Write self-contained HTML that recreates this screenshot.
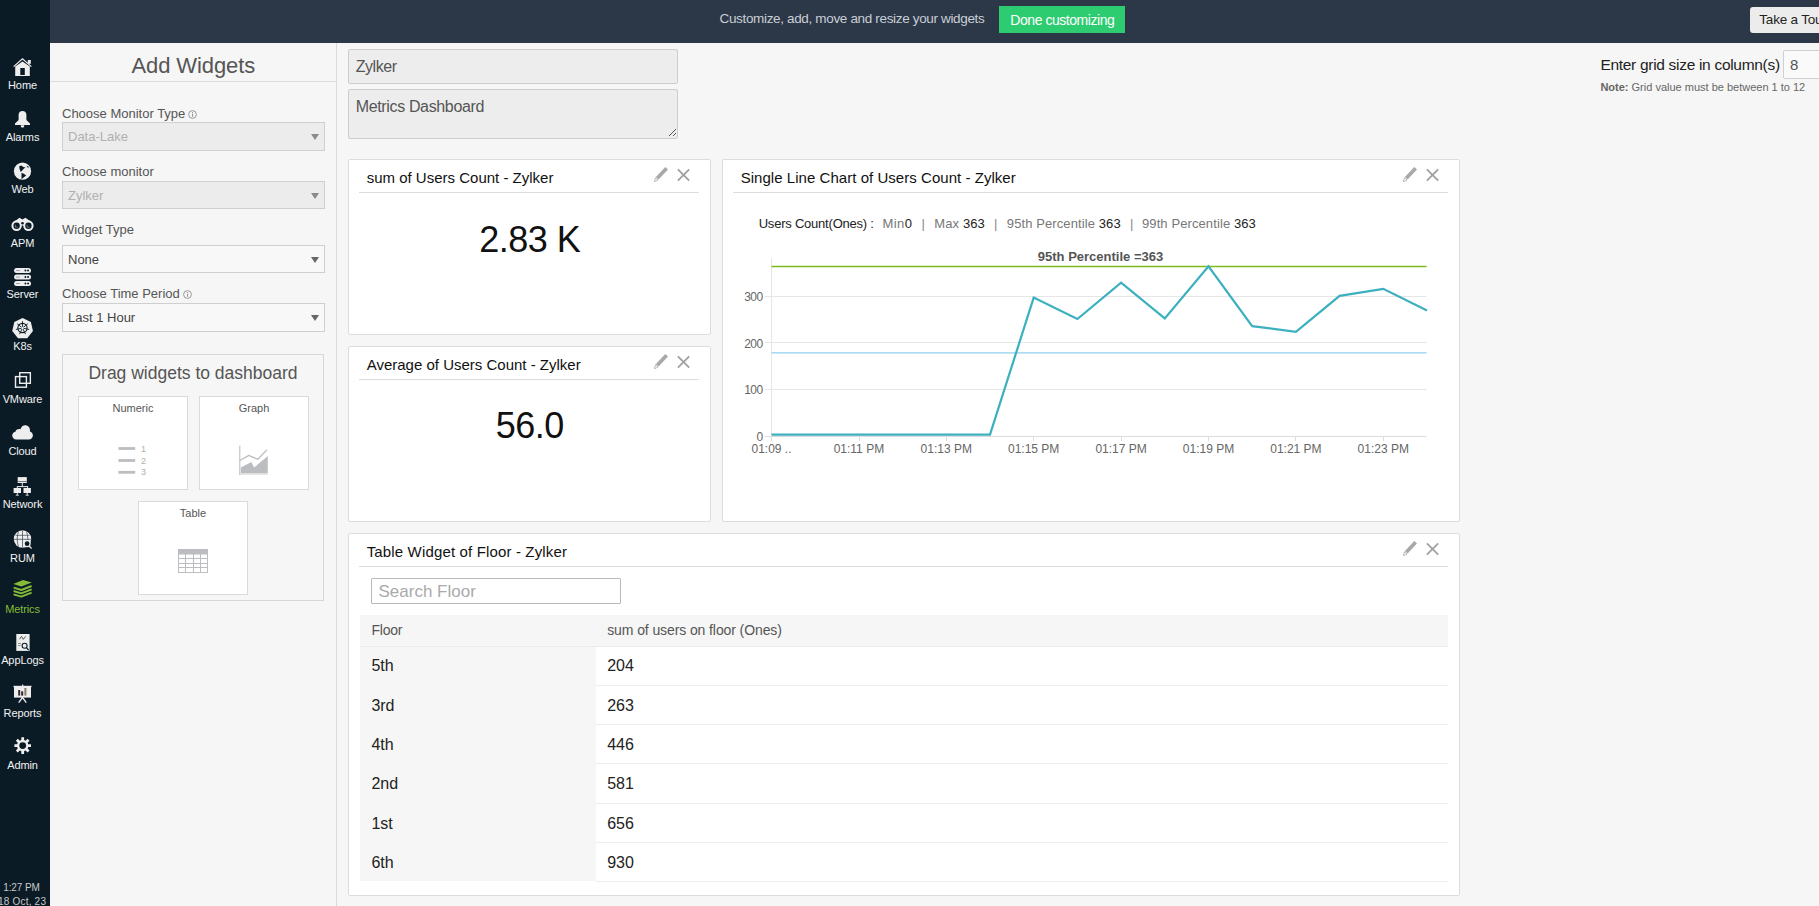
<!DOCTYPE html>
<html><head><meta charset="utf-8">
<style>
*{box-sizing:border-box;margin:0;padding:0}
html,body{width:1819px;height:906px;overflow:hidden;background:#f6f6f6;font-family:"Liberation Sans",sans-serif;color:#333}
.a{position:absolute;white-space:nowrap}
#side{position:absolute;left:0;top:0;width:50px;height:906px;background:#0a1b26}
#top{position:absolute;left:50px;top:0;width:1769px;height:43px;background:#2c3848}
#lp{position:absolute;left:50px;top:43px;width:287px;height:863px;background:#f6f6f6;border-right:1px solid #dadada}
.nl{position:absolute;left:0;width:45px;text-align:center;color:#fff;font-size:11px;line-height:13px;white-space:nowrap;letter-spacing:-0.1px}
.ni{position:absolute}
.lbl{position:absolute;left:62px;font-size:13px;line-height:15px;color:#555;white-space:nowrap}
.sel{position:absolute;left:62px;width:263px;height:29px;border:1px solid #cfcfcf;background:#f8f8f8;font-size:13px;color:#444;padding:0 0 0 5px;line-height:27px;white-space:nowrap}
.sel.dis{background:#ececec;color:#b0b0b0}
.sel i{position:absolute;right:5px;top:11px;width:0;height:0;border-left:4.6px solid transparent;border-right:4.6px solid transparent;border-top:6px solid #666}
.sel.dis i{border-top-color:#8a8a8a}
.card{position:absolute;background:#fff;border:1px solid #dadada}
.card .ct{position:absolute;left:0;right:0;top:4.5px;text-align:center;font-size:11px;line-height:13px;color:#555}
.wd{position:absolute;background:#fff;border:1px solid #dcdcdc;border-radius:2px}
.wt{position:absolute;left:18px;font-size:15px;line-height:17px;color:#111;white-space:nowrap}
.wl{position:absolute;left:11px;height:1px;background:#dcdcdc}
.ic{position:absolute}
</style></head><body>
<div id="side"></div><div id="top"></div><div id="lp"></div>
<svg class="ic" style="left:0;top:0" width="50" height="906" viewBox="0 0 50 906"><path d="M13.6 66.6 L22.5 58.8 L31.4 66.6" fill="none" stroke="#eeeeee" stroke-width="1.2"/><path d="M15.2 76 V66.6 L22.5 61.6 L29.8 66.6 V76Z M20.3 68.1 V75 H24.8 V68.1Z" fill="#eeeeee" fill-rule="evenodd"/><rect x="27.8" y="60" width="3" height="3.8" fill="#eeeeee"/><path d="M22.5 111 C20.2 111 18.6 112.6 18.6 114.8 V120 L15 123.6 V124.9 H30 V123.6 L26.4 120 V114.8 C26.4 112.6 24.8 111 22.5 111Z M20.8 125.3 H24.2 V126 C24.2 127 23.5 127.6 22.5 127.6 C21.5 127.6 20.8 127 20.8 126Z" fill="#eeeeee"/><circle cx="22.5" cy="171.2" r="8.6" fill="#eeeeee"/><path d="M19.2 166.2 L21.4 165.6 L23.2 167 L25.6 167.6 L24 168.6 L22.2 170.6 L20.8 172 L19.6 169.2Z M21.4 173 L23.4 173.4 L26.2 175.4 L22.6 178.2 L21.6 179.4Z M26.4 165.8 L28.6 166.4 L28.2 168.2Z" fill="#0a1b26"/><path d="M12.5 225.5 C12.5 222.5 14 221 16.5 220 L19.5 217.8 L22.5 219.5 L25.5 217.8 L28.5 220 C31 221 32.8 222.5 32.8 225.5Z" fill="#eeeeee"/><circle cx="16.6" cy="225.8" r="5.2" fill="#eeeeee"/><circle cx="28.4" cy="225.8" r="5.2" fill="#eeeeee"/><circle cx="16.6" cy="225.8" r="3.2" fill="#0a1b26"/><circle cx="28.4" cy="225.8" r="3.2" fill="#0a1b26"/><circle cx="22.5" cy="223.3" r="1.3" fill="#0a1b26"/><path d="M15.3 224.6 V227.2 H17.8 M27.1 224.6 V227.2 H29.6" fill="none" stroke="#aaa" stroke-width="0.6"/><rect x="14.1" y="268.0" width="16.9" height="5" rx="2.5" fill="#eeeeee"/><rect x="16" y="270.1" width="4" height="0.9" fill="#9a9aa8"/><circle cx="25.4" cy="270.5" r="0.95" fill="#0a1b26"/><circle cx="28.1" cy="270.5" r="0.95" fill="#0a1b26"/><rect x="14.1" y="274.5" width="16.9" height="5" rx="2.5" fill="#eeeeee"/><rect x="16" y="276.6" width="4" height="0.9" fill="#9a9aa8"/><circle cx="25.4" cy="277.0" r="0.95" fill="#0a1b26"/><circle cx="28.1" cy="277.0" r="0.95" fill="#0a1b26"/><rect x="14.1" y="281.0" width="16.9" height="5" rx="2.5" fill="#eeeeee"/><rect x="16" y="283.1" width="4" height="0.9" fill="#9a9aa8"/><circle cx="25.4" cy="283.5" r="0.95" fill="#0a1b26"/><circle cx="28.1" cy="283.5" r="0.95" fill="#0a1b26"/><path d="M22.60 318.00 L30.89 321.99 L32.93 330.96 L27.20 338.15 L18.00 338.15 L12.27 330.96 L14.31 321.99Z" fill="#eeeeee"/><circle cx="22.5" cy="328" r="4.6" fill="none" stroke="#0a1b26" stroke-width="1.1"/><path d="M22.50 328.00 L22.50 321.20 M22.50 328.00 L27.82 323.76 M22.50 328.00 L29.13 329.51 M22.50 328.00 L25.45 334.13 M22.50 328.00 L19.55 334.13 M22.50 328.00 L15.87 329.51 M22.50 328.00 L17.18 323.76 " stroke="#0a1b26" stroke-width="0.9"/><circle cx="22.5" cy="328" r="1.2" fill="#eeeeee"/><rect x="19.75" y="372.7" width="10.6" height="10.6" fill="none" stroke="#eeeeee" stroke-width="1.4"/><rect x="15.5" y="376.6" width="10.9" height="10.6" fill="none" stroke="#eeeeee" stroke-width="1.4"/><path d="M16.2 439.6 C14 439.6 12.2 437.8 12.2 435.6 C12.2 433.6 13.6 432.2 15.4 431.8 C15.9 430 17.3 429 19 429 C19.5 429 20 429.1 20.4 429.3 C21.2 426.8 23 425.2 25.2 425.2 C28.2 425.2 30 427.6 30 430.6 C30 431 30 431.2 29.9 431.6 C31.6 432.1 32.9 433.6 32.9 435.6 C32.9 437.8 31.1 439.6 28.9 439.6Z" fill="#eeeeee"/><rect x="17.7" y="477.1" width="9.1" height="5.9" fill="#eeeeee"/><rect x="17.7" y="481" width="9.1" height="0.8" fill="#55606a"/><path d="M22.25 483 V486.6 M17.3 486.6 H27.6 M17.3 486.1 V488 M27.6 486.1 V488" fill="none" stroke="#eeeeee" stroke-width="1"/><rect x="13.6" y="488" width="7.4" height="5" fill="#eeeeee"/><rect x="23.5" y="488" width="7.4" height="5" fill="#eeeeee"/><path d="M17.3 493 V495 M15.8 495.2 H18.8 M27.2 493 V495 M25.7 495.2 H28.7" fill="none" stroke="#eeeeee" stroke-width="0.9"/><circle cx="22.5" cy="539" r="8.7" fill="#eeeeee"/><path d="M22.5 530.3 V547.7 M13.8 539.3 H31.2 M15.5 535.3 H29.5 M18.5 531.5 C16.8 535 16.8 543 18.5 546.5 M26.5 531.5 C28.2 535 28.2 543 26.5 546.5" fill="none" stroke="#4a5560" stroke-width="0.8"/><circle cx="27.1" cy="543.7" r="3.6" fill="#eeeeee"/><circle cx="27.1" cy="543.7" r="2.4" fill="#0a1b26"/><path d="M29 546 L31.6 548.4" stroke="#eeeeee" stroke-width="1.3"/><path d="M13.3 584 L23 580.1 L31.8 582.6 L21.3 586.6Z" fill="#86bb37"/><path d="M13.6 587.7 L21.3 590.0 L31.6 586.0" fill="none" stroke="#86bb37" stroke-width="1.9" stroke-linejoin="round"/><path d="M13.6 591.0 L21.3 593.3 L31.6 589.3" fill="none" stroke="#86bb37" stroke-width="1.9" stroke-linejoin="round"/><path d="M13.6 594.3 L21.3 596.6 L31.6 592.6" fill="none" stroke="#86bb37" stroke-width="1.9" stroke-linejoin="round"/><rect x="16.3" y="634" width="13.3" height="16.9" fill="#eeeeee"/><path d="M19.4 639.3 L21.5 636.4 L23.3 639.4 L25.6 636.4" fill="none" stroke="#4a4a5a" stroke-width="0.9"/><path d="M18 643.4 H21 M18 645.4 H20.5" stroke="#777" stroke-width="0.8"/><circle cx="24.6" cy="645.7" r="2.5" fill="none" stroke="#0a1b26" stroke-width="1.1"/><path d="M26.4 647.6 L28.6 650" stroke="#0a1b26" stroke-width="1.2"/><rect x="14" y="686" width="17" height="11.6" fill="#eeeeee"/><rect x="13.5" y="685.8" width="18" height="1.4" fill="#eeeeee"/><rect x="22" y="684.6" width="1.3" height="1.5" fill="#eeeeee"/><rect x="18.2" y="690" width="2" height="5.6" fill="#3a2a2a"/><rect x="21.2" y="691.3" width="2" height="4.3" fill="#2a2a3a"/><rect x="24.4" y="688" width="2" height="7.6" fill="#8a7a6a"/><path d="M22.5 697.5 L18.7 702.6 M22.5 697.5 L26.3 702.6" stroke="#eeeeee" stroke-width="1.3"/><path d="M21.23 740.09 L21.36 737.31 L24.04 737.31 L24.17 740.09 L25.56 740.67 L27.62 738.79 L29.51 740.68 L27.63 742.74 L28.21 744.13 L30.99 744.26 L30.99 746.94 L28.21 747.07 L27.63 748.46 L29.51 750.52 L27.62 752.41 L25.56 750.53 L24.17 751.11 L24.04 753.89 L21.36 753.89 L21.23 751.11 L19.84 750.53 L17.78 752.41 L15.89 750.52 L17.77 748.46 L17.19 747.07 L14.41 746.94 L14.41 744.26 L17.19 744.13 L17.77 742.74 L15.89 740.68 L17.78 738.79 L19.84 740.67Z" fill="#eeeeee" fill-rule="evenodd"/><circle cx="22.7" cy="745.6" r="3.4" fill="#0a1b26"/></svg>
<div class="nl" style="top:79.4px;color:#f2f2f2">Home</div>
<div class="nl" style="top:131.3px;color:#f2f2f2">Alarms</div>
<div class="nl" style="top:183.3px;color:#f2f2f2">Web</div>
<div class="nl" style="top:237.4px;color:#f2f2f2">APM</div>
<div class="nl" style="top:288.3px;color:#f2f2f2">Server</div>
<div class="nl" style="top:340.2px;color:#f2f2f2">K8s</div>
<div class="nl" style="top:392.7px;color:#f2f2f2">VMware</div>
<div class="nl" style="top:445.2px;color:#f2f2f2">Cloud</div>
<div class="nl" style="top:497.7px;color:#f2f2f2">Network</div>
<div class="nl" style="top:552.4px;color:#f2f2f2">RUM</div>
<div class="nl" style="top:602.6px;color:#86bb37">Metrics</div>
<div class="nl" style="top:654.1px;color:#f2f2f2">AppLogs</div>
<div class="nl" style="top:706.5px;color:#f2f2f2">Reports</div>
<div class="nl" style="top:758.7px;color:#f2f2f2">Admin</div>
<div class="nl" style="top:881.0px;font-size:10px;color:#c8c8c8;left:-1px">1:27 PM</div><div class="nl" style="top:895.2px;font-size:10px;color:#c8c8c8;left:-2px;letter-spacing:0.2px">18 Oct, 23</div>
<div class="a" style="left:-6.699999999999989px;width:400px;text-align:center;top:52.63px;font-size:22px;line-height:25.3px;color:#555;font-weight:400;letter-spacing:-0.1px">Add Widgets</div><div class="a" style="left:50px;top:81px;width:286px;height:1px;background:#dcdcdc"></div>
<div class="a" style="left:62px;top:106.82px;font-size:13px;line-height:14.95px;color:#555;font-weight:400;">Choose Monitor Type<svg width="9" height="9" viewBox="0 0 9 9" style="vertical-align:-1px;margin-left:3px"><circle cx="4.5" cy="4.5" r="3.9" fill="none" stroke="#999" stroke-width="1"/><rect x="4" y="3.8" width="1.1" height="3" fill="#999"/><rect x="4" y="2.1" width="1.1" height="1.1" fill="#999"/></svg></div><div class="sel dis" style="top:122px">Data-Lake<i></i></div>
<div class="a" style="left:62px;top:164.92px;font-size:13px;line-height:14.95px;color:#555;font-weight:400;">Choose monitor</div><div class="sel dis" style="top:181px;height:28px">Zylker<i></i></div>
<div class="a" style="left:62px;top:222.72px;font-size:13px;line-height:14.95px;color:#555;font-weight:400;">Widget Type</div><div class="sel" style="top:245px;height:28px">None<i></i></div>
<div class="a" style="left:62px;top:286.62px;font-size:13px;line-height:14.95px;color:#555;font-weight:400;">Choose Time Period<svg width="9" height="9" viewBox="0 0 9 9" style="vertical-align:-1px;margin-left:3px"><circle cx="4.5" cy="4.5" r="3.9" fill="none" stroke="#999" stroke-width="1"/><rect x="4" y="3.8" width="1.1" height="3" fill="#999"/><rect x="4" y="2.1" width="1.1" height="1.1" fill="#999"/></svg></div><div class="sel" style="top:303px">Last 1 Hour<i></i></div>
<div class="a" style="left:62px;top:354px;width:262px;height:247px;border:1px solid #d6d6d6"></div>
<div class="a" style="left:-7.0px;width:400px;text-align:center;top:362.88px;font-size:17.5px;line-height:20.12px;color:#555;font-weight:400;">Drag widgets to dashboard</div><div class="card" style="left:78px;top:396px;width:110px;height:94px"><div class="ct">Numeric</div></div><div class="card" style="left:199px;top:396px;width:110px;height:94px"><div class="ct">Graph</div></div><div class="card" style="left:138px;top:501px;width:110px;height:94px"><div class="ct">Table</div></div>
<svg class="ic" style="left:110px;top:440px" width="40" height="40" viewBox="110 440 40 40"><g fill="#bcbec1"><rect x="118.4" y="447.1" width="16.8" height="2.8"/><rect x="118.4" y="459.1" width="16.8" height="2.8"/><rect x="118.4" y="470.9" width="16.8" height="2.8"/></g><g font-family="Liberation Sans" font-size="9" fill="#b0b0b0"><text x="141" y="451.9">1</text><text x="141" y="463.8">2</text><text x="141" y="474.9">3</text></g></svg>
<svg class="ic" style="left:232px;top:440px" width="40" height="40" viewBox="232 440 40 40"><path d="M239.8 474.5 H268.2" stroke="#e6e6e6" stroke-width="1"/><path d="M239.8 445.7 V475" stroke="#b8babd" stroke-width="1"/><path d="M239.5 460.75 L248.8 455.45 L257.8 459.2 L266.9 449.9" fill="none" stroke="#b8babd" stroke-width="1.3"/><path d="M240.8 467.4 L251.4 462.1 L254.1 467.6 L267.8 455.9 V473.6 H240.8Z" fill="#bbbdc0"/></svg>
<svg class="ic" style="left:170px;top:540px" width="45" height="40" viewBox="170 540 45 40"><rect x="178" y="549" width="30" height="5.5" fill="#bbbdc0"/><path d="M178.5 549 V573 M185.5 554 V573 M193.5 554 V573 M200.5 554 V573 M207.5 549 V573 M178 558.5 H208 M178 563.5 H208 M178 567.5 H208 M178 572.5 H208" fill="none" stroke="#bbbdc0" stroke-width="1"/></svg>
<div class="a" style="left:719.5px;top:11.36px;font-size:13.5px;line-height:15.52px;color:#c9ced6;font-weight:400;letter-spacing:-0.34px">Customize, add, move and resize your widgets</div><div class="a" style="left:999px;top:6px;width:126px;height:27px;background:#2ecc71"></div><div class="a" style="left:1010.3px;top:12.10px;font-size:14px;line-height:16.1px;color:#fff;font-weight:400;letter-spacing:-0.45px">Done customizing</div><div class="a" style="left:1750px;top:7px;width:80px;height:26px;background:#ececec;border-radius:3px"></div><div class="a" style="left:1759.3px;top:11.76px;font-size:13.5px;line-height:15.52px;color:#222;font-weight:400;letter-spacing:-0.2px">Take a Tour</div>
<div class="a" style="left:348px;top:49px;width:330px;height:35px;background:#ededed;border:1px solid #cdcdcd;border-radius:2px"></div><div class="a" style="left:355.7px;top:58.06px;font-size:16px;line-height:18.4px;color:#555;font-weight:400;letter-spacing:-0.45px">Zylker</div><div class="a" style="left:348px;top:89px;width:330px;height:50px;background:#ededed;border:1px solid #cdcdcd;border-radius:2px"></div><div class="a" style="left:355.7px;top:98.26px;font-size:16px;line-height:18.4px;color:#555;font-weight:400;letter-spacing:-0.35px">Metrics Dashboard</div><svg class="ic" style="left:668px;top:128px" width="9" height="9" viewBox="0 0 9 9"><path d="M8 1 L1 8 M8 5 L5 8" stroke="#555" stroke-width="1"/></svg>
<div class="a" style="left:1600.4px;top:55.92px;font-size:15.5px;line-height:17.82px;color:#222;font-weight:400;letter-spacing:-0.3px">Enter grid size in column(s)</div><div class="a" style="left:1783px;top:50px;width:60px;height:29px;background:#fafafa;border:1px solid #d0d0d0;border-radius:2px"></div><div class="a" style="left:1790px;top:56.38px;font-size:15px;line-height:17.25px;color:#555;font-weight:400;">8</div><div class="a" style="left:1600.4px;top:80.56px;font-size:11px;line-height:12.65px;color:#666;font-weight:400;"><b>Note:</b> Grid value must be between 1 to 12</div>
<div class="wd" style="left:348px;top:159px;width:363px;height:176px"></div><div class="a" style="left:366.7px;top:169.28px;font-size:15px;line-height:17.25px;color:#111;font-weight:400;letter-spacing:0px">sum of Users Count - Zylker</div><div class="wl" style="left:359px;top:192px;width:340px"></div><svg class="ic" style="left:654px;top:167.2px" width="15" height="15" viewBox="0 0 15 15"><path d="M11.3 0 L14 2.6 L4.6 12.6 L1.9 10Z" fill="#a8a8a8"/><path d="M1.6 10.6 L4 13 L0.3 14.8Z" fill="none" stroke="#a8a8a8" stroke-width="0.8"/></svg><svg class="ic" style="left:676px;top:168px" width="14" height="14" viewBox="0 0 14 14"><path d="M1.9 1.3 L13.2 12.6 M13.2 1.3 L1.9 12.6" stroke="#a2a2a2" stroke-width="1.9"/></svg>
<div class="wd" style="left:348px;top:346px;width:363px;height:176px"></div><div class="a" style="left:366.7px;top:356.28px;font-size:15px;line-height:17.25px;color:#111;font-weight:400;letter-spacing:0px">Average of Users Count - Zylker</div><div class="wl" style="left:359px;top:379px;width:340px"></div><svg class="ic" style="left:654px;top:354.20000000000005px" width="15" height="15" viewBox="0 0 15 15"><path d="M11.3 0 L14 2.6 L4.6 12.6 L1.9 10Z" fill="#a8a8a8"/><path d="M1.6 10.6 L4 13 L0.3 14.8Z" fill="none" stroke="#a8a8a8" stroke-width="0.8"/></svg><svg class="ic" style="left:676px;top:355px" width="14" height="14" viewBox="0 0 14 14"><path d="M1.9 1.3 L13.2 12.6 M13.2 1.3 L1.9 12.6" stroke="#a2a2a2" stroke-width="1.9"/></svg>
<div class="wd" style="left:722px;top:159px;width:738px;height:363px"></div><div class="a" style="left:740.7px;top:169.28px;font-size:15px;line-height:17.25px;color:#111;font-weight:400;letter-spacing:0.04px">Single Line Chart of Users Count - Zylker</div><div class="wl" style="left:733px;top:192px;width:715px"></div><svg class="ic" style="left:1403px;top:167.2px" width="15" height="15" viewBox="0 0 15 15"><path d="M11.3 0 L14 2.6 L4.6 12.6 L1.9 10Z" fill="#a8a8a8"/><path d="M1.6 10.6 L4 13 L0.3 14.8Z" fill="none" stroke="#a8a8a8" stroke-width="0.8"/></svg><svg class="ic" style="left:1425px;top:168px" width="14" height="14" viewBox="0 0 14 14"><path d="M1.9 1.3 L13.2 12.6 M13.2 1.3 L1.9 12.6" stroke="#a2a2a2" stroke-width="1.9"/></svg>
<div class="wd" style="left:348px;top:533px;width:1112px;height:363px"></div><div class="a" style="left:366.7px;top:543.28px;font-size:15px;line-height:17.25px;color:#111;font-weight:400;letter-spacing:0.15px">Table Widget of Floor - Zylker</div><div class="wl" style="left:359px;top:566px;width:1089px"></div><svg class="ic" style="left:1403px;top:541.2px" width="15" height="15" viewBox="0 0 15 15"><path d="M11.3 0 L14 2.6 L4.6 12.6 L1.9 10Z" fill="#a8a8a8"/><path d="M1.6 10.6 L4 13 L0.3 14.8Z" fill="none" stroke="#a8a8a8" stroke-width="0.8"/></svg><svg class="ic" style="left:1425px;top:542px" width="14" height="14" viewBox="0 0 14 14"><path d="M1.9 1.3 L13.2 12.6 M13.2 1.3 L1.9 12.6" stroke="#a2a2a2" stroke-width="1.9"/></svg>
<div class="a" style="left:329.70000000000005px;width:400px;text-align:center;top:218.73px;font-size:36px;line-height:41.4px;color:#111;font-weight:400;letter-spacing:-0.5px">2.83 K</div><div class="a" style="left:329.70000000000005px;width:400px;text-align:center;top:405.33px;font-size:36px;line-height:41.4px;color:#111;font-weight:400;letter-spacing:-0.5px">56.0</div><div class="a" style="left:758.7px;top:216.92px;font-size:13px;line-height:14.95px;color:#222;font-weight:400;letter-spacing:-0.22px">Users Count(Ones) :</div><div class="a" style="left:882.4px;top:216.92px;font-size:13px;line-height:14.95px;color:#777;font-weight:400;letter-spacing:0.5px">Min<span style="color:#222">0</span></div><div class="a" style="left:921.5px;top:216.92px;font-size:13px;line-height:14.95px;color:#888;font-weight:400;">|</div><div class="a" style="left:934.3px;top:216.92px;font-size:13px;line-height:14.95px;color:#777;font-weight:400;letter-spacing:0.1px">Max <span style="color:#222">363</span></div><div class="a" style="left:994px;top:216.92px;font-size:13px;line-height:14.95px;color:#888;font-weight:400;">|</div><div class="a" style="left:1006.8px;top:216.92px;font-size:13px;line-height:14.95px;color:#777;font-weight:400;letter-spacing:0.1px">95th Percentile <span style="color:#222">363</span></div><div class="a" style="left:1130px;top:216.92px;font-size:13px;line-height:14.95px;color:#888;font-weight:400;">|</div><div class="a" style="left:1142px;top:216.92px;font-size:13px;line-height:14.95px;color:#777;font-weight:400;letter-spacing:0.1px">99th Percentile <span style="color:#222">363</span></div>
<svg class="ic" style="left:722px;top:159px" width="738" height="363" viewBox="722 159 738 363"><path d="M765 389.5 H1426.5" stroke="#e6e6e6" stroke-width="1"/><path d="M765 342.5 H1426.5" stroke="#e6e6e6" stroke-width="1"/><path d="M765 296.5 H1426.5" stroke="#e6e6e6" stroke-width="1"/><path d="M765 436.5 H1426.5" stroke="#dcdcdc" stroke-width="1"/><path d="M771.5 258 V437" stroke="#e6e6e6" stroke-width="1"/><path d="M771.5 437 V441" stroke="#dcdcdc" stroke-width="1"/><path d="M859.5 437 V441" stroke="#dcdcdc" stroke-width="1"/><path d="M946.5 437 V441" stroke="#dcdcdc" stroke-width="1"/><path d="M1033.5 437 V441" stroke="#dcdcdc" stroke-width="1"/><path d="M1121.5 437 V441" stroke="#dcdcdc" stroke-width="1"/><path d="M1208.5 437 V441" stroke="#dcdcdc" stroke-width="1"/><path d="M1295.5 437 V441" stroke="#dcdcdc" stroke-width="1"/><path d="M1383.5 437 V441" stroke="#dcdcdc" stroke-width="1"/><path d="M771.5 266.5 H1426.5" stroke="#7cbb1a" stroke-width="1.3"/><path d="M771.5 352.8 H1426.5" stroke="#8fd0f0" stroke-width="1.3"/><polyline points="771.5,434.7 815.2,434.7 858.9,434.7 902.6,434.7 946.3,434.7 990.0,434.7 1033.7,297.6 1077.4,319.0 1121.1,282.6 1164.8,318.4 1208.5,266.4 1252.2,326.1 1295.9,331.8 1339.6,295.8 1383.3,288.8 1427.0,310.6" fill="none" stroke="#3cb0bf" stroke-width="2.2" stroke-linejoin="miter"/><g font-family="Liberation Sans" font-size="12" fill="#666" text-anchor="end" letter-spacing="-0.6"><text x="762.5" y="440.6">0</text><text x="762.5" y="394.1">100</text><text x="762.5" y="347.5">200</text><text x="762.5" y="301.0">300</text></g><g font-family="Liberation Sans" font-size="12" fill="#666" text-anchor="middle"><text x="771.5" y="452.6">01:09 ..</text><text x="858.9" y="452.6">01:11 PM</text><text x="946.3" y="452.6">01:13 PM</text><text x="1033.7" y="452.6">01:15 PM</text><text x="1121.1" y="452.6">01:17 PM</text><text x="1208.5" y="452.6">01:19 PM</text><text x="1295.9" y="452.6">01:21 PM</text><text x="1383.3" y="452.6">01:23 PM</text></g><text x="1100.5" y="261" font-family="Liberation Sans" font-size="13" font-weight="700" fill="#555" text-anchor="middle">95th Percentile =363</text></svg>
<div class="a" style="left:371px;top:578px;width:250px;height:26px;border:1px solid #b9b9b9;background:#fff;border-radius:1px"></div><div class="a" style="left:378.5px;top:581.73px;font-size:17px;line-height:19.55px;color:#aaa;font-weight:400;">Search Floor</div><div class="a" style="left:360px;top:615px;width:1088px;height:32px;background:#f6f6f6;border-bottom:1px solid #eaeaea"></div><div class="a" style="left:371.4px;top:622.30px;font-size:14px;line-height:16.1px;color:#555;font-weight:400;letter-spacing:-0.2px">Floor</div><div class="a" style="left:607.2px;top:622.30px;font-size:14px;line-height:16.1px;color:#555;font-weight:400;letter-spacing:-0.1px">sum of users on floor (Ones)</div><div class="a" style="left:360px;top:647px;width:236px;height:234px;background:#f6f6f6"></div><div class="a" style="left:596px;top:685px;width:852px;height:1px;background:#eeeeee"></div><div class="a" style="left:371.4px;top:657.26px;font-size:16px;line-height:18.4px;color:#222;font-weight:400;">5th</div><div class="a" style="left:607.2px;top:657.26px;font-size:16px;line-height:18.4px;color:#222;font-weight:400;">204</div><div class="a" style="left:596px;top:724px;width:852px;height:1px;background:#eeeeee"></div><div class="a" style="left:371.4px;top:696.66px;font-size:16px;line-height:18.4px;color:#222;font-weight:400;">3rd</div><div class="a" style="left:607.2px;top:696.66px;font-size:16px;line-height:18.4px;color:#222;font-weight:400;">263</div><div class="a" style="left:596px;top:763px;width:852px;height:1px;background:#eeeeee"></div><div class="a" style="left:371.4px;top:736.06px;font-size:16px;line-height:18.4px;color:#222;font-weight:400;">4th</div><div class="a" style="left:607.2px;top:736.06px;font-size:16px;line-height:18.4px;color:#222;font-weight:400;">446</div><div class="a" style="left:596px;top:803px;width:852px;height:1px;background:#eeeeee"></div><div class="a" style="left:371.4px;top:775.46px;font-size:16px;line-height:18.4px;color:#222;font-weight:400;">2nd</div><div class="a" style="left:607.2px;top:775.46px;font-size:16px;line-height:18.4px;color:#222;font-weight:400;">581</div><div class="a" style="left:596px;top:842px;width:852px;height:1px;background:#eeeeee"></div><div class="a" style="left:371.4px;top:814.56px;font-size:16px;line-height:18.4px;color:#222;font-weight:400;">1st</div><div class="a" style="left:607.2px;top:814.56px;font-size:16px;line-height:18.4px;color:#222;font-weight:400;">656</div><div class="a" style="left:596px;top:881px;width:852px;height:1px;background:#eeeeee"></div><div class="a" style="left:371.4px;top:854.06px;font-size:16px;line-height:18.4px;color:#222;font-weight:400;">6th</div><div class="a" style="left:607.2px;top:854.06px;font-size:16px;line-height:18.4px;color:#222;font-weight:400;">930</div>
</body></html>
